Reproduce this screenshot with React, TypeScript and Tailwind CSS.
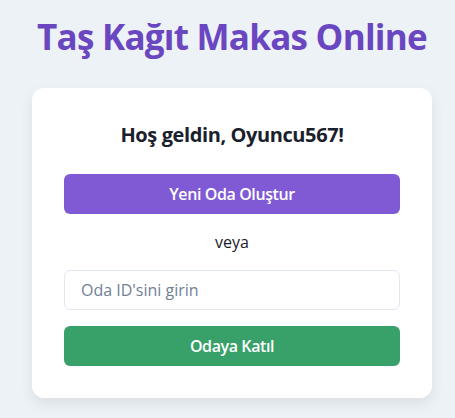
import React from "react";

export default function App() {
  return (
    <div
      className="min-h-[418px] bg-[#edf2f7] pl-[32px] pt-[17px]"
      style={{ fontFamily: '"Open Sans", "Noto Sans", sans-serif' }}
    >
      <div className="w-[400px] flex flex-col items-center">
        <h1 className="text-[35px] leading-[40px] font-bold text-[#6b46c1] whitespace-nowrap tracking-[-0.75px]">
          Taş Kağıt Makas Online
        </h1>
        <div className="mt-[31px] w-[400px] bg-white rounded-[12px] shadow-[0_6px_14px_rgba(0,0,0,0.08)] px-[32px] pt-[32px] pb-[32px] flex flex-col">
          <h2 className="text-[20px] leading-[30px] font-bold text-[#1a202c] text-center tracking-[-0.4px]">
            Hoş geldin, Oyuncu567!
          </h2>
          <button className="mt-[24px] h-[40px] w-full rounded-[6px] bg-[#805ad5] text-white text-[16px] font-semibold tracking-[-0.4px]">
            Yeni Oda Oluştur
          </button>
          <p className="mt-[16px] text-[16px] leading-[24px] text-[#1a202c] text-center">veya</p>
          <input
            className="mt-[16px] h-[40px] w-full rounded-[6px] border border-[#e2e8f0] px-[16px] text-[16px] text-[#1a202c] placeholder:text-[#718096] outline-none"
            placeholder="Oda ID'sini girin"
          />
          <button className="mt-[16px] h-[40px] w-full rounded-[6px] bg-[#38a169] text-white text-[16px] font-semibold tracking-[-0.4px]">
            Odaya Katıl
          </button>
        </div>
      </div>
    </div>
  );
}
